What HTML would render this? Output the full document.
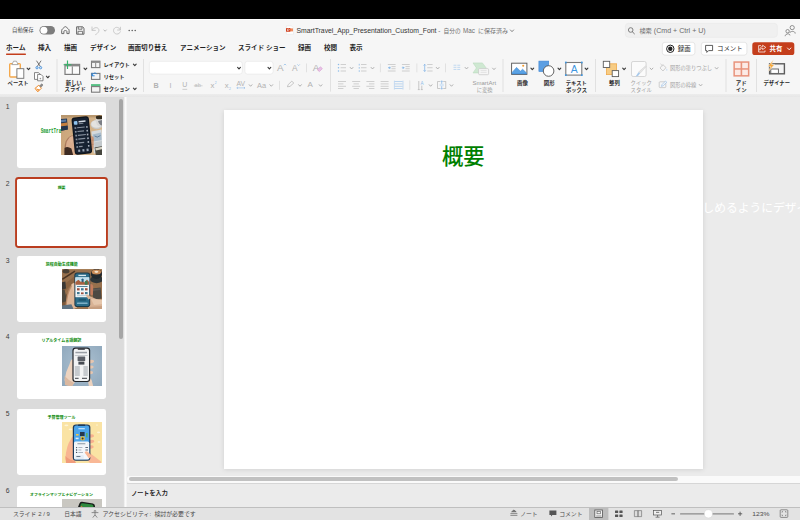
<!DOCTYPE html>
<html lang="ja"><head><meta charset="utf-8"><title>SmartTravel_App_Presentation_Custom_Font</title>
<style>
html,body{margin:0;padding:0;}
body{width:800px;height:520px;overflow:hidden;position:relative;background:#ebebeb;font-family:"Liberation Sans",sans-serif;}
.abs{position:absolute;}
#menubar{left:0;top:0;width:800px;height:19.4px;background:#000;}
#chrome{left:0;top:19.4px;width:800px;height:74.6px;background:#f6f6f6;border-top:1px solid #fdfdfd;box-sizing:border-box;}
#band{left:0;top:94px;width:800px;height:2.6px;background:linear-gradient(180deg,#ededed,#e6e6e6);}
#panel{left:0;top:96.5px;width:127.4px;height:411.6px;background:linear-gradient(90deg,#dbdbdb 0,#dbdbdb 123.4px,#fbfbfb 125.1px,#fbfbfb 125.7px,#ebebeb 127.4px);overflow:hidden;}
#pscroll{left:118.8px;top:99.2px;width:4px;height:239.6px;border-radius:2px;background:#a6a6a6;}
#work{left:126.4px;top:96.5px;width:673.6px;height:379.3px;background:#ebebeb;}
#slide{left:224.2px;top:110.2px;width:479px;height:359.2px;background:#fff;box-shadow:0 0.6px 5px rgba(0,0,0,0.12);}
#hscroll{left:127px;top:475.6px;width:673px;height:7.4px;background:#fafafa;border-radius:3px 0 0 3px;}
#hthumb{left:128.9px;top:477.1px;width:549.3px;height:4.3px;border-radius:2.2px;background:#c1c1c1;}
#notes{left:126.4px;top:483.2px;width:673.6px;height:24px;background:#ebebeb;border-top:0.8px solid #d6d6d6;}
#status{left:0;top:506.8px;width:800px;height:13.2px;background:#e3e3e3;border-top:0.8px solid #bfbfbf;}
.th{position:absolute;left:17.1px;width:88.6px;height:66.1px;background:#fff;border-radius:2.4px;}
.th.sel{left:17px;top:178.85px !important;width:89.1px;height:66.7px;box-shadow:0 0 0 1.9px #ba3d1f;border-radius:1.6px;}
.ov{position:absolute;left:0;top:0;}
.ov text{font-family:"Liberation Sans","Noto Sans CJK JP",sans-serif;}
.tx{position:absolute;white-space:nowrap;line-height:1.2;color:transparent;pointer-events:none;}
.st{position:absolute;left:40.7px;top:126.2px;width:33.4px;height:8px;overflow:hidden;white-space:nowrap;font-family:"Liberation Mono",monospace;font-weight:bold;font-size:6.9px;line-height:8px;color:#129a2c;transform:scaleX(0.62);transform-origin:0 0;}
.im{position:absolute;overflow:hidden;}
#app{position:relative;width:800px;height:520px;overflow:hidden;}
</style></head><body><div id="app">
<div id="work" class="abs"></div>
<div id="slide" class="abs"></div>
<div id="hscroll" class="abs"></div><div id="hthumb" class="abs"></div>
<div id="notes" class="abs"></div>
<div id="panel" class="abs"></div>
<div class="th" style="top:102.4px"></div><div class="th sel" style="top:179.15px"></div><div class="th" style="top:255.9px"></div><div class="th" style="top:332.65px"></div><div class="th" style="top:409.4px"></div><div class="th" style="top:486.15px"></div><svg class="im" style="left:61.4px;top:115.35px" width="40.4" height="40.1" viewBox="0 0 40.4 40.1"><defs><filter id="b0" x="-10%" y="-10%" width="120%" height="120%"><feGaussianBlur stdDeviation="0.45"/></filter></defs><g filter="url(#b0)">
<defs><linearGradient id="d1" x1="0" y1="0" x2="1" y2="0.3"><stop offset="0" stop-color="#c9a277"/><stop offset="1" stop-color="#d7b88f"/></linearGradient></defs>
<rect x="-2" y="-2" width="45" height="45" fill="url(#d1)"/>
<rect x="-2" y="-2" width="45" height="4.4" fill="#b8976e"/>
<path d="M-1 4L6 3.4L6.8 14.6L-1 16Z" fill="#2b3d57"/><path d="M-1 8.6L6.4 7.6L6.6 10.4L-1 11.6Z" fill="#c47f3c"/><path d="M-1 12L6.6 10.8L6.8 14.6L-1 16Z" fill="#22344c"/><path d="M0 5L5 4.6L5.2 6.6L0 7.2Z" fill="#5b7ea6"/>
<ellipse cx="35.8" cy="9.6" rx="6.2" ry="4.6" fill="#c9c8c5"/><ellipse cx="35.6" cy="9" rx="5.4" ry="3.8" fill="#e4e3e0"/>
<path d="M34.6 2Q34.4 10.6 38.4 11.4Q41.4 11.4 42 2Z" fill="#d9d8d6"/><ellipse cx="38.4" cy="2.4" rx="3.6" ry="1.9" fill="#33291f"/><path d="M37 6Q38.6 10.4 41 10.6V5Z" fill="#7b7f86"/>
<path d="M30.4 16.4L40.6 14.4L42 37L33 38.4Z" fill="#d4d9dc"/><path d="M31.6 19.6L40 17.6L40.6 25L32.6 26.6Z" fill="#a9bccb"/><path d="M33 27.6L41 26L41.4 32L34 33.4Z" fill="#c3c9cc"/><path d="M33.6 21Q36 23.4 39.4 20.6" stroke="#4d6f8e" stroke-width="0.8" fill="none"/>
<path d="M33.6 32.6L42 31V41H35Z" fill="#45453e"/><path d="M34.2 33.2L42 31.6V34L34.8 35.6Z" fill="#d8d4c6"/>
<path d="M4.6 26.4Q7.4 21 11.4 20.2L14.6 23L16 41H3.6Q2.8 32 4.6 26.4Z" fill="#a9795c"/><path d="M5.8 26.6Q8.2 21.8 11.4 21L14.6 23L16 41H5Q4.2 32 5.8 26.6Z" fill="#d9ad8e"/>
<path d="M8.6 22.4Q11.4 20.4 12.6 22.8Q12.8 26.4 10.6 28.4Q8.4 27 8.6 22.4Z" fill="#deb394"/>
<path d="M3.6 33Q6.4 30.6 10.4 33.6L12.4 41H3.4Z" fill="#3c2b23"/>
<path d="M29.4 21.2Q32.8 20.4 32.8 23.6L32.6 33Q31.6 36.4 29.4 35Z" fill="#c99474"/><path d="M29.6 25.2H32.6M29.6 29.4H32.6" stroke="#a87658" stroke-width="0.5"/>
<g transform="translate(0.9 0.2) rotate(-5.7 20 20)">
<rect x="11.2" y="1.6" width="17.4" height="37.4" rx="3" fill="#0f141b"/>
<rect x="12.2" y="2.8" width="15.4" height="35" rx="2.2" fill="#192230"/>
<rect x="13.2" y="5.4" width="3.6" height="3.6" rx="0.9" fill="#8fc4ee"/><rect x="18" y="5.6" width="7" height="1.5" fill="#d5dde6"/><rect x="18" y="7.8" width="4.6" height="0.9" fill="#7d8896"/>
<g fill="#8792a0"><rect x="13.4" y="11.4" width="1.7" height="1.7"/><rect x="16" y="11.5" width="7.6" height="1.2"/><rect x="13.4" y="15.2" width="1.7" height="1.7"/><rect x="16" y="15.3" width="6.6" height="1.2"/><rect x="13.4" y="19" width="1.7" height="1.7"/><rect x="16" y="19.1" width="8" height="1.2"/><rect x="13.4" y="22.8" width="1.7" height="1.7"/><rect x="16" y="22.9" width="7" height="1.2"/><rect x="13.4" y="26.6" width="1.7" height="1.7"/><rect x="16" y="26.7" width="5.6" height="1.2"/><rect x="13.4" y="30.4" width="1.7" height="1.7"/><rect x="16" y="30.5" width="3.6" height="1.2"/>
<rect x="25" y="11.4" width="1.5" height="1.7" fill="#aab4c0"/><rect x="25" y="15.2" width="1.5" height="1.7" fill="#aab4c0"/><rect x="25" y="19" width="1.5" height="1.7" fill="#aab4c0"/><rect x="25" y="22.8" width="1.5" height="1.7" fill="#aab4c0"/><rect x="25" y="26.6" width="1.5" height="1.7" fill="#aab4c0"/><rect x="25" y="30.4" width="1.5" height="1.7" fill="#aab4c0"/>
<rect x="14.8" y="34" width="2" height="2.4" fill="#9aa6b6"/><rect x="19" y="34" width="2" height="2.4" fill="#9aa6b6"/><rect x="23.2" y="34" width="2" height="2.4" fill="#9aa6b6"/></g>
</g>
</g></svg><svg class="im" style="left:61.5px;top:268.85px" width="40.3" height="40.05" viewBox="0 0 40.3 40.05"><defs><filter id="b1" x="-10%" y="-10%" width="120%" height="120%"><feGaussianBlur stdDeviation="0.45"/></filter></defs><g filter="url(#b1)">
<rect x="-2" y="-2" width="45" height="45" fill="#97704d"/>
<path d="M-1 18L14 6L16 9L-1 26Z" fill="#8a6342"/><path d="M-1 30L10 20L12 41H-1Z" fill="#7b583b"/>
<rect x="-2" y="-2" width="45" height="2.6" fill="#b08a62"/>
<ellipse cx="4" cy="2.2" rx="3.4" ry="2.2" fill="#4a4036"/>
<path d="M0 9.4L12.6 1.6L13.4 2.8L0.6 11Z" fill="#4a3424"/>
<path d="M-1 13.4L3.4 12.6L4 19.6L-1 21Z" fill="#3a3835"/><path d="M-1 21L2.6 20.4L5 32L-1 34Z" fill="#4e463d"/>
<ellipse cx="34.6" cy="10.4" rx="6.4" ry="3.8" fill="#2f3539"/>
<ellipse cx="34.4" cy="5" rx="5.6" ry="5" fill="#23292e"/><ellipse cx="34.4" cy="3" rx="4.7" ry="2.5" fill="#c88a56"/><ellipse cx="34.4" cy="2.8" rx="2" ry="1.1" fill="#f3e2cb"/>
<path d="M30.2 19.4L38.6 18.6L39.6 29.6L31.4 31Z" fill="#4d4843"/><path d="M30.6 20L38.2 19.2L38.4 21L30.8 22Z" fill="#5e5953"/>
<path d="M28 15.2Q31.2 14.6 31.2 17.6L31 25.4Q29.6 26.6 28 25.6Z" fill="#c47c5c"/>
<path d="M3.6 36Q4.2 24 8.4 17.4Q11 13 13.2 14.4L14 24L15 38.4L9 41H3Z" fill="#b98a68"/>
<path d="M4.8 36Q5.4 25 9.2 18.4Q11.4 14.4 13.2 15.4L14 24L15 38.4L9 41H4.4Z" fill="#dcb597"/>
<path d="M9.4 15.6Q11.6 13.2 13.4 14.6Q14 20 13.4 25.6Q10.6 23 9.4 15.6Z" fill="#e6c4a8"/>
<path d="M0 36.4L9.4 35.2L12 41H0Z" fill="#5f7282"/>
<path d="M24 25.4Q26.4 24.4 28.6 27.4L41 33V41H26.6Q23.8 33 24 25.4Z" fill="#d8b294"/><path d="M29 30L41 30.6V35L32 36Z" fill="#e5c6ab"/><path d="M26 38L41 37V41H27Z" fill="#c79f80"/>
<rect x="12.4" y="3.4" width="15.8" height="34.6" rx="2.8" fill="#1f3a48"/>
<rect x="13.4" y="4.4" width="13.8" height="32.6" rx="1.8" fill="#2c6c88"/>
<rect x="13.4" y="8.4" width="13.8" height="19.8" fill="#f3f5f6"/>
<rect x="13.4" y="8.4" width="13.8" height="7.4" fill="#bfe0ee"/><path d="M13.4 15.8V13L16.4 10.8L19 13L20.4 11.6L22.6 13.4L25 10.6L27.2 13V15.8Z" fill="#a9603f"/><path d="M19.4 10.4Q20.6 8.6 21.8 10.4Q21.8 12.6 20.6 13.6Q19.4 12.6 19.4 10.4Z" fill="#2c5f80"/><path d="M22.8 15.8V12.6L24.2 11.4L25.6 12.6V15.8Z" fill="#3f7a52"/>
<rect x="16.4" y="5.8" width="7.6" height="1.3" fill="#dbe8ee"/>
<g fill="#3f7891"><rect x="15" y="17" width="10.6" height="0.9"/><rect x="15" y="19.2" width="2.6" height="2.2" fill="#9c4e3c"/><rect x="19" y="19.2" width="2.6" height="2.2"/><rect x="23" y="19.2" width="2.6" height="2.2" fill="#9c4e3c"/><rect x="15" y="23" width="2.6" height="2.2"/><rect x="19" y="23.4" width="2.6" height="1.8" fill="#9c4e3c"/><rect x="23" y="23" width="2.6" height="2.2"/><rect x="15" y="26.4" width="10.6" height="0.7" fill="#9dbccb"/></g>
<rect x="16.6" y="29.8" width="7.4" height="2" rx="0.6" fill="#1f5670"/><rect x="15" y="33.4" width="10.6" height="1.5" rx="0.5" fill="#7eb0c6"/>
<path d="M23.8 26.2Q25.4 24.8 27 26.2L29.4 29L26.4 30.6Z" fill="#dcb597"/>
</g></svg><svg class="im" style="left:61.6px;top:345.65px" width="40.1" height="40.05" viewBox="0 0 40.1 40.05"><defs><filter id="b2" x="-10%" y="-10%" width="120%" height="120%"><feGaussianBlur stdDeviation="0.45"/></filter></defs><g filter="url(#b2)">
<defs><radialGradient id="rg4" cx="50%" cy="45%" r="70%"><stop offset="0" stop-color="#adc2d2"/><stop offset="1" stop-color="#8ca5ba"/></radialGradient></defs>
<rect x="-2" y="-2" width="45" height="45" fill="url(#rg4)"/>
<path d="M2.6 34Q3.4 26 7.6 18Q9 12.6 11 13.4L11.6 22L13 36L10 40L4 39Z" fill="#ecd3bf"/>
<path d="M2.6 30Q6 34 12 37L10 40.5L3 39Z" fill="#dab8a0"/>
<path d="M27.6 14Q32.4 13 32 16Q30 17.6 27.6 17.4ZM27.6 19.6Q32 18.8 31.6 21.6Q30 23 27.6 22.8ZM27.6 25Q31.4 24.4 31 27.2Q29.6 28.4 27.6 28.2Z" fill="#e6c6b0"/>
<path d="M25.6 32.6Q28.4 31 29.6 34L31.4 41H27Z" fill="#ecd2be"/>
<rect x="10.4" y="1.5" width="17.8" height="34.6" rx="3" fill="#23272c"/>
<rect x="11.6" y="2.7" width="15.4" height="32.2" rx="2" fill="#f2f3f4"/>
<rect x="15.6" y="2.4" width="7.4" height="1.3" rx="0.6" fill="#23272c"/>
<rect x="13.4" y="5.8" width="11.6" height="1.5" fill="#9a9fa6"/>
<rect x="15.6" y="10.6" width="7.6" height="4.4" rx="0.5" fill="#5c6168"/><rect x="16.4" y="15.6" width="6" height="3" fill="#474c53"/>
<g fill="#b4b8be"><rect x="12.8" y="9" width="12.8" height="0.7"/><rect x="12.8" y="20" width="5" height="10" opacity="0.7"/><rect x="19.4" y="20" width="2" height="10" fill="#f2f3f4"/><rect x="21.4" y="20" width="4.4" height="10" opacity="0.7"/><rect x="13" y="31.8" width="3.6" height="1" fill="#3c4046"/><rect x="20" y="31.8" width="5" height="1" fill="#3c4046"/></g>
</g></svg><svg class="im" style="left:61.6px;top:422.35px" width="40.0" height="40.2" viewBox="0 0 40.0 40.2"><defs><filter id="b3" x="-10%" y="-10%" width="120%" height="120%"><feGaussianBlur stdDeviation="0.45"/></filter></defs><g filter="url(#b3)">
<rect x="-2" y="-2" width="45" height="45" fill="#fae3a4"/>
<g fill="#fdf3d6"><ellipse cx="4.4" cy="3.4" rx="2" ry="0.8"/><ellipse cx="8.6" cy="7.4" rx="2" ry="0.8"/><ellipse cx="36.6" cy="10.4" rx="1.6" ry="0.8"/><ellipse cx="37" cy="20" rx="1.4" ry="0.7"/><ellipse cx="35" cy="3" rx="1.2" ry="0.6"/></g>
<path d="M3.4 37Q4 24 9 17Q10.6 13.6 11.6 15L12 26L13 38L10 41L4.4 40Z" fill="#f8b592"/>
<path d="M3.4 34Q7 38 13 39L14 41H4Z" fill="#f09c7c"/>
<path d="M27.6 12.6Q32.4 11.4 32 14.4Q30 16 27.6 15.8ZM27.6 18Q32.6 17 32.2 20Q30 21.6 27.6 21.4ZM27.6 23.4Q32 22.6 31.6 25.6Q30 27 27.6 26.8Z" fill="#f7b08e"/>
<path d="M22 30Q23.6 27.6 26 29.6L39 39.6V41H28Q23 36 22 30Z" fill="#f9b896"/>
<rect x="10.8" y="2.4" width="17.6" height="36.4" rx="3.2" fill="#1e3a5c"/>
<rect x="12" y="3.6" width="15.2" height="34" rx="2.2" fill="#4ba4ea"/>
<rect x="12" y="19.6" width="15.2" height="18" rx="1.6" fill="#f3f7fb"/>
<rect x="16" y="2.6" width="7.2" height="1.5" rx="0.7" fill="#1e3a5c"/>
<rect x="16.4" y="6" width="6.4" height="1.3" fill="#bfe0fa"/>
<rect x="18" y="10" width="4.6" height="4" fill="#27384e"/><rect x="18.6" y="14.6" width="4" height="3.6" rx="0.6" fill="#f1b92e"/><circle cx="20.6" cy="16.4" r="1" fill="#27384e"/>
<rect x="24" y="11" width="1.6" height="4.4" fill="#58b06a"/><rect x="14" y="12" width="2.6" height="1.6" fill="#f1c84a"/><rect x="13.6" y="15.6" width="3" height="1.6" fill="#dceefb"/>
<rect x="13.4" y="20.8" width="12.4" height="2" rx="1" fill="#fff" stroke="#c9d6e2" stroke-width="0.3"/><rect x="15.4" y="21.4" width="8" height="0.8" fill="#6c7a8a"/>
<g fill="#3c4a5c"><circle cx="14.6" cy="25.6" r="0.7"/><rect x="16.4" y="25.2" width="4" height="0.8" fill="#9aa6b4"/><rect x="23.4" y="25.2" width="2.6" height="0.8"/><circle cx="14.6" cy="28" r="0.7"/><rect x="16.4" y="27.6" width="3" height="0.8" fill="#9aa6b4"/><rect x="23.4" y="27.6" width="2.6" height="0.8"/><circle cx="14.6" cy="30.4" r="0.7"/><rect x="16.4" y="30" width="4.6" height="0.8" fill="#9aa6b4"/></g>
<rect x="13.4" y="33" width="8.4" height="4" rx="0.8" fill="#e4edf6"/><rect x="14.4" y="34" width="4" height="0.8" fill="#4a5a6c"/>
<path d="M22.6 30.6Q23.8 28.4 26 30L30 34L27 36.4Z" fill="#f9b896"/>
</g></svg><svg class="im" style="left:61.6px;top:499.2px" width="40.3" height="8.4" viewBox="0 0 40.3 8.4"><defs><filter id="b4" x="-10%" y="-10%" width="120%" height="120%"><feGaussianBlur stdDeviation="0.45"/></filter></defs><g filter="url(#b4)">
<rect x="-2" y="-2" width="45" height="14" fill="#c9c7c1"/>
<path d="M15.6 9L17.4 4.4Q18 2.6 20 2.8L31 4.4Q33 5 33 7V9Z" fill="#1a1f1c"/>
<path d="M17.6 9L18.8 5.2Q19.2 4 20.6 4.2L30 5.6Q31.4 6 31.4 7.4V9Z" fill="#2e8a3c"/>
<circle cx="19.6" cy="7.4" r="0.7" fill="#c8743a"/>
</g></svg>
<div id="pscroll" class="abs"></div>
<div id="band" class="abs"></div>
<div id="chrome" class="abs"></div>
<div id="menubar" class="abs"></div>
<div id="status" class="abs"></div>
<div id="labels"><span class="tx" style="left:12.0px;top:27.1px;font-size:5.40px">自動保存</span><span class="tx" style="left:296.4px;top:26.2px;font-size:6.80px">SmartTravel_App_Presentation_Custom_Font</span><span class="tx" style="left:438.2px;top:26.6px;font-size:6.40px">-</span><span class="tx" style="left:443.6px;top:27.0px;font-size:5.70px">自分の</span><span class="tx" style="left:463.0px;top:26.6px;font-size:6.30px">Mac</span><span class="tx" style="left:478.0px;top:26.8px;font-size:6.00px">に保存済み</span><span class="tx" style="left:639.4px;top:26.8px;font-size:6.20px">検索</span><span class="tx" style="left:653.8px;top:26.5px;font-size:6.50px">(Cmd + Ctrl + U)</span><span class="tx" style="left:6.0px;top:43.6px;font-size:6.55px">ホーム</span><span class="tx" style="left:38.0px;top:43.6px;font-size:6.55px">挿入</span><span class="tx" style="left:64.0px;top:43.6px;font-size:6.55px">描画</span><span class="tx" style="left:90.0px;top:43.6px;font-size:6.55px">デザイン</span><span class="tx" style="left:128.0px;top:43.6px;font-size:6.55px">画面切り替え</span><span class="tx" style="left:180.0px;top:43.6px;font-size:6.55px">アニメーション</span><span class="tx" style="left:238.0px;top:43.6px;font-size:6.55px">スライド ショー</span><span class="tx" style="left:298.0px;top:43.6px;font-size:6.55px">録画</span><span class="tx" style="left:324.0px;top:43.6px;font-size:6.55px">校閲</span><span class="tx" style="left:349.5px;top:43.6px;font-size:6.55px">表示</span><span class="tx" style="left:677.8px;top:44.9px;font-size:6.40px">録画</span><span class="tx" style="left:717.0px;top:44.9px;font-size:6.40px">コメント</span><span class="tx" style="left:769.6px;top:44.9px;font-size:6.40px">共有</span><span class="tx" style="left:7.6px;top:80.1px;font-size:5.30px">ペースト</span><span class="tx" style="left:65.8px;top:79.7px;font-size:5.30px">新しい</span><span class="tx" style="left:64.6px;top:86.1px;font-size:5.30px">スライド</span><span class="tx" style="left:103.4px;top:61.6px;font-size:5.30px">レイアウト</span><span class="tx" style="left:103.4px;top:73.5px;font-size:5.30px">リセット</span><span class="tx" style="left:103.4px;top:85.6px;font-size:5.30px">セクション</span><span class="tx" style="left:277.0px;top:61.2px;font-size:9.90px">A</span><span class="tx" style="left:292.0px;top:62.7px;font-size:8.30px">A</span><span class="tx" style="left:312.8px;top:61.2px;font-size:9.90px">A</span><span class="tx" style="left:153.6px;top:80.6px;font-size:7.20px">B</span><span class="tx" style="left:169.4px;top:80.6px;font-size:7.20px">I</span><span class="tx" style="left:182.2px;top:80.5px;font-size:7.00px">U</span><span class="tx" style="left:194.6px;top:81.9px;font-size:5.60px">ab</span><span class="tx" style="left:210.6px;top:80.7px;font-size:7.80px">x</span><span class="tx" style="left:214.8px;top:80.4px;font-size:3.40px">2</span><span class="tx" style="left:224.8px;top:80.7px;font-size:7.80px">x</span><span class="tx" style="left:229.0px;top:86.4px;font-size:3.40px">2</span><span class="tx" style="left:236.4px;top:79.4px;font-size:6.80px">AV</span><span class="tx" style="left:257.0px;top:80.6px;font-size:7.40px">Aa</span><span class="tx" style="left:307.6px;top:79.1px;font-size:8.00px">A</span><span class="tx" style="left:472.6px;top:79.9px;font-size:5.60px">SmartArt</span><span class="tx" style="left:476.7px;top:86.6px;font-size:5.30px">に変換</span><span class="tx" style="left:420.4px;top:80.0px;font-size:4.60px">A</span><span class="tx" style="left:517.0px;top:80.0px;font-size:5.40px">画像</span><span class="tx" style="left:543.8px;top:80.0px;font-size:5.40px">図形</span><span class="tx" style="left:570.6px;top:62.5px;font-size:10.40px">A</span><span class="tx" style="left:565.8px;top:80.1px;font-size:5.30px">テキスト</span><span class="tx" style="left:566.0px;top:86.3px;font-size:5.30px">ボックス</span><span class="tx" style="left:609.0px;top:80.0px;font-size:5.40px">整列</span><span class="tx" style="left:630.6px;top:80.1px;font-size:5.30px">クイック</span><span class="tx" style="left:630.6px;top:86.6px;font-size:5.30px">スタイル</span><span class="tx" style="left:670.0px;top:64.9px;font-size:5.25px">図形の塗りつぶし</span><span class="tx" style="left:670.0px;top:81.8px;font-size:5.25px">図形の枠線</span><span class="tx" style="left:735.8px;top:80.0px;font-size:5.40px">アド</span><span class="tx" style="left:735.8px;top:86.5px;font-size:5.40px">イン</span><span class="tx" style="left:763.5px;top:80.0px;font-size:5.30px">デザイナー</span><span class="tx" style="left:5.7px;top:102.4px;font-size:6.80px">1</span><span class="tx" style="left:5.7px;top:179.2px;font-size:6.80px">2</span><span class="tx" style="left:5.7px;top:255.9px;font-size:6.80px">3</span><span class="tx" style="left:5.7px;top:332.7px;font-size:6.80px">4</span><span class="tx" style="left:5.7px;top:409.4px;font-size:6.80px">5</span><span class="tx" style="left:5.7px;top:486.2px;font-size:6.80px">6</span><span class="tx" style="left:40.7px;top:125.9px;font-size:6.90px">SmartTravel</span><span class="tx" style="left:57.7px;top:184.9px;font-size:3.90px">概要</span><span class="tx" style="left:45.8px;top:261.6px;font-size:4.00px">旅程自動生成機能</span><span class="tx" style="left:41.4px;top:338.4px;font-size:4.00px">リアルタイム言語翻訳</span><span class="tx" style="left:47.4px;top:415.1px;font-size:4.00px">予算管理ツール</span><span class="tx" style="left:30.0px;top:491.9px;font-size:3.95px">オフラインマップとナビゲーション</span><span class="tx" style="left:441.9px;top:143.1px;font-size:21.30px">概要</span><span class="tx" style="left:702.4px;top:200.1px;font-size:11.75px">しめるようにデザイ</span><span class="tx" style="left:131.2px;top:488.7px;font-size:6.10px">ノートを入力</span><span class="tx" style="left:13.0px;top:510.5px;font-size:5.80px">スライド</span><span class="tx" style="left:38.2px;top:510.4px;font-size:6.00px">2 / 9</span><span class="tx" style="left:64.2px;top:510.5px;font-size:5.80px">日本語</span><span class="tx" style="left:102.4px;top:510.4px;font-size:5.98px">アクセシビリティ:</span><span class="tx" style="left:154.4px;top:510.4px;font-size:5.92px">検討が必要です</span><span class="tx" style="left:520.2px;top:510.5px;font-size:5.80px">ノート</span><span class="tx" style="left:559.2px;top:510.5px;font-size:5.85px">コメント</span><span class="tx" style="left:752.2px;top:510.4px;font-size:6.00px">123%</span></div>
<svg class="ov" width="800" height="520" viewBox="0 0 800 520"><text x="12" y="32.35" font-size="5.4" fill="#4a4a4a">自動保存</text><rect x="39.5" y="26" width="15.5" height="8.6" rx="4.3" fill="#7d7d7d"/><circle cx="43.9" cy="30.3" r="3.5" fill="#fff"/><path d="M61.7 30.4Q61.7 29.6 62.4 29L64.6 27Q65.4 26.3 66.2 27L68.4 29Q69.1 29.6 69.1 30.4V33.6H66.9V31.4Q66.9 30.6 65.4 30.6Q63.9 30.6 63.9 31.4V33.6H61.7Z" fill="none" stroke="#696969" stroke-width="1" stroke-linejoin="round"/><path d="M76.6 26.8H82.6L84 28.2V34.2H76.6Z" fill="none" stroke="#696969" stroke-width="1" stroke-linejoin="round"/><path d="M78.3 26.9V29.2H82V26.9M78 34.1V31.3H82.6V34.1" fill="none" stroke="#696969" stroke-width="0.9"/><path d="M92 27V30.4H95.4M92.2 30.2C93.4 27.6 96.6 26.8 98.3 28.6C99.8 30.4 98.6 33 95.6 34.6" fill="none" stroke="#c4c4c4" stroke-width="0.9" stroke-linecap="round"/><path d="M103.90 29.95L105.10 31.25L106.30 29.95" fill="none" stroke="#a8a8a8" stroke-width="0.8" stroke-linecap="round" stroke-linejoin="round"/><path d="M120.4 27.2V30H117.6M120.3 29.8C119.2 27 115.6 26.4 114 28.8C112.8 31 114 33.6 116.6 34C118.4 34.2 119.8 33.2 120.4 31.8" fill="none" stroke="#c4c4c4" stroke-width="0.9" stroke-linecap="round"/><circle cx="129.2" cy="30.6" r="0.75" fill="#555"/><circle cx="132.2" cy="30.6" r="0.75" fill="#555"/><circle cx="135.2" cy="30.6" r="0.75" fill="#555"/><path d="M286.4 25.9H291.4L293.5 28V34.2H286.4Z" fill="#fff" stroke="#dedede" stroke-width="0.4"/><rect x="289.6" y="28.4" width="3.4" height="3" fill="#f08a5c"/><rect x="286" y="28" width="4.3" height="3.8" rx="0.5" fill="#d0401f"/><path d="M287.5 31V28.9H288.6Q289.3 29 289.3 29.6Q289.3 30.2 288.6 30.3H287.5" fill="none" stroke="#fff" stroke-width="0.5"/><text x="296.4" y="32.88" font-size="6.8" fill="#333" textLength="140" lengthAdjust="spacingAndGlyphs">SmartTravel_App_Presentation_Custom_Font</text><text x="438.2" y="32.83" font-size="6.4" fill="#707070">-</text><text x="443.6" y="32.57" font-size="5.7" fill="#707070">自分の</text><text x="463" y="32.79" font-size="6.3" fill="#707070">Mac</text><text x="478" y="32.68" font-size="6" fill="#707070">に保存済み</text><path d="M510.40 29.95L512.00 31.65L513.60 29.95" fill="none" stroke="#666" stroke-width="0.8" stroke-linecap="round" stroke-linejoin="round"/><rect x="625.3" y="23.3" width="152" height="14" rx="3.2" fill="#f0f0f0" stroke="#e7e7e7" stroke-width="0.6"/><circle cx="630.7" cy="30" r="2.3" fill="none" stroke="#666" stroke-width="0.8"/><path d="M632.4 31.8L634.4 33.8" stroke="#666" stroke-width="0.9" stroke-linecap="round"/><text x="639.4" y="32.86" font-size="6.2" fill="#6b6b6b">検索</text><text x="653.8" y="32.87" font-size="6.5" fill="#6b6b6b" textLength="51.9" lengthAdjust="spacingAndGlyphs">(Cmd + Ctrl + U)</text><circle cx="792.2" cy="27.6" r="2.1" fill="none" stroke="#777" stroke-width="0.8"/><circle cx="787.6" cy="31.2" r="1.7" fill="none" stroke="#777" stroke-width="0.8"/><path d="M785.2 36.2C785.2 33.2 790 33.2 790 35.4M789.6 33C790 31 795.4 30.6 795.2 33.6" fill="none" stroke="#777" stroke-width="0.8"/><text x="6" y="49.99" font-size="6.55" font-weight="bold" fill="#1f1f1f">ホーム</text><text x="38" y="49.99" font-size="6.55" font-weight="bold" fill="#1f1f1f">挿入</text><text x="64" y="49.99" font-size="6.55" font-weight="bold" fill="#1f1f1f">描画</text><text x="90" y="49.99" font-size="6.55" font-weight="bold" fill="#1f1f1f">デザイン</text><text x="128" y="49.99" font-size="6.55" font-weight="bold" fill="#1f1f1f">画面切り替え</text><text x="180" y="49.99" font-size="6.55" font-weight="bold" fill="#1f1f1f">アニメーション</text><text x="238" y="49.99" font-size="6.55" font-weight="bold" fill="#1f1f1f">スライド ショー</text><text x="298" y="49.99" font-size="6.55" font-weight="bold" fill="#1f1f1f">録画</text><text x="324" y="49.99" font-size="6.55" font-weight="bold" fill="#1f1f1f">校閲</text><text x="349.5" y="49.99" font-size="6.55" font-weight="bold" fill="#1f1f1f">表示</text><rect x="6" y="53.6" width="20" height="1.3" rx="0.6" fill="#c43e1c"/><rect x="662.3" y="42.3" width="32.6" height="12.8" rx="2.6" fill="#fff" stroke="#d6d6d6" stroke-width="0.6"/><circle cx="670.3" cy="48.8" r="3.7" fill="none" stroke="#222" stroke-width="1"/><circle cx="670.3" cy="48.8" r="2.2" fill="#222"/><text x="677.8" y="51.13" font-size="6.4" fill="#1f1f1f">録画</text><rect x="701.3" y="42.3" width="45.6" height="12.8" rx="2.6" fill="#fff" stroke="#d6d6d6" stroke-width="0.6"/><path d="M705.6 45.4H712.6V50.6H708.6L706.8 52.4V50.6H705.6Z" fill="none" stroke="#333" stroke-width="0.8" stroke-linejoin="round"/><text x="717" y="51.13" font-size="6.4" fill="#1f1f1f">コメント</text><rect x="752.3" y="42.3" width="42" height="12.8" rx="2.6" fill="#c43e1c"/><path d="M761 45.6H758.6V52H765V50.4M762.6 45.2L765.8 47.4L762.6 49.6V48.2C761 48.2 760.2 49 759.8 50.2C759.8 47.8 761 46.6 762.6 46.6Z" fill="none" stroke="#fff" stroke-width="0.7" stroke-linejoin="round"/><text x="769.6" y="51.13" font-size="6.4" font-weight="bold" fill="#fff">共有</text><path d="M787.50 48.00L789.20 49.80L790.90 48.00" fill="none" stroke="#fff" stroke-width="0.9" stroke-linecap="round" stroke-linejoin="round"/><rect x="9.7" y="63.6" width="10.6" height="13.4" rx="1" fill="#fff" stroke="#f4a84c" stroke-width="1.4"/><path d="M11.8 64.6L13.6 61.2H16.4L18.2 64.6Z" fill="#fff" stroke="#8c8c8c" stroke-width="0.7" stroke-linejoin="round"/><rect x="16.9" y="68.7" width="6.9" height="9.6" fill="#fff" stroke="#6f6f6f" stroke-width="0.9"/><path d="M27.10 68.12L28.50 69.68L29.90 68.12" fill="none" stroke="#3a3a3a" stroke-width="1.1" stroke-linecap="round" stroke-linejoin="round"/><text x="7.6" y="85.26" font-size="5.3" font-weight="bold" fill="#2a2a2a">ペースト</text><path d="M36.7 61L40.3 66.4M40.9 61L37.3 66.4" stroke="#5c5c5c" stroke-width="0.85" stroke-linecap="round"/><circle cx="37" cy="67.7" r="1.15" fill="#d5e6f7" stroke="#3c8ad9" stroke-width="0.8"/><circle cx="40.6" cy="67.7" r="1.15" fill="#d5e6f7" stroke="#3c8ad9" stroke-width="0.8"/><path d="M34.5 72.6H38.4L40 74.2V79.4H34.5Z" fill="#fff" stroke="#686868" stroke-width="0.8" stroke-linejoin="round"/><path d="M37.6 74.4H41L43 76.4V80.8H37.6Z" fill="#fff" stroke="#686868" stroke-width="0.8" stroke-linejoin="round"/><path d="M39.6 78.6H41.2M40.4 77.8V79.4" stroke="#686868" stroke-width="0.5"/><path d="M46.40 76.22L47.80 77.78L49.20 76.22" fill="none" stroke="#3a3a3a" stroke-width="1.1" stroke-linecap="round" stroke-linejoin="round"/><path d="M35 88.4L38.8 85.2L41.4 88.2L37.8 91.8Z" fill="#fff" stroke="#f08a28" stroke-width="1"/><path d="M36.4 88.6L38.2 90.6L39.4 89.4" fill="#f08a28" stroke="#f08a28" stroke-width="0.8"/><path d="M39.6 85.8L41.8 83.8L43 85L41 87.2Z" fill="#8a8a8a" stroke="#6f6f6f" stroke-width="0.5"/><rect x="56.6" y="59" width="0.8" height="33" fill="#dcdcdc"/><rect x="65" y="64.4" width="14.6" height="10" fill="#fbfbfb" stroke="#7c7c7c" stroke-width="1.2"/><rect x="65" y="64.2" width="14.6" height="2.2" fill="#8a8a8a"/><path d="M72.3 66.4V74.4" stroke="#7c7c7c" stroke-width="1"/><path d="M67.5 60.6V69M63.6 64.7H71.4" stroke="#35b56a" stroke-width="1.15"/><path d="M84.00 68.12L85.40 69.68L86.80 68.12" fill="none" stroke="#3a3a3a" stroke-width="1.1" stroke-linecap="round" stroke-linejoin="round"/><text x="65.85" y="84.91" font-size="5.3" font-weight="bold" fill="#2a2a2a">新しい</text><text x="64.6" y="91.31" font-size="5.3" font-weight="bold" fill="#2a2a2a">スライド</text><rect x="91.5" y="61.2" width="8.4" height="6.4" fill="#f4f4f4" stroke="#7a7a7a" stroke-width="1.1"/><rect x="91.5" y="61" width="8.4" height="1.9" fill="#8a8a8a"/><path d="M95.7 63V67.6" stroke="#7a7a7a" stroke-width="0.9"/><text x="103.4" y="66.76" font-size="5.3" font-weight="bold" fill="#2a2a2a">レイアウト</text><path d="M133.40 64.12L134.80 65.68L136.20 64.12" fill="none" stroke="#3a3a3a" stroke-width="1.1" stroke-linecap="round" stroke-linejoin="round"/><rect x="91.5" y="73.4" width="8.4" height="6" fill="#f4f4f4" stroke="#7a7a7a" stroke-width="1.1"/><path d="M92.2 75.8C92.4 73.2 95.4 72 96.8 74.2M92 72.8V75.8H94.6" fill="none" stroke="#2d86de" stroke-width="1"/><text x="103.4" y="78.71" font-size="5.3" font-weight="bold" fill="#2a2a2a">リセット</text><rect x="91.5" y="86.6" width="8.4" height="5.6" fill="#f4f4f4" stroke="#7a7a7a" stroke-width="1.1"/><rect x="91" y="84.1" width="9.4" height="1.9" fill="#56c084"/><text x="103.4" y="90.76" font-size="5.3" font-weight="bold" fill="#2a2a2a">セクション</text><path d="M133.40 88.12L134.80 89.68L136.20 88.12" fill="none" stroke="#3a3a3a" stroke-width="1.1" stroke-linecap="round" stroke-linejoin="round"/><rect x="143.0" y="59" width="0.8" height="33" fill="#dcdcdc"/><rect x="149.3" y="61.3" width="93" height="12.8" rx="2.6" fill="#fff" stroke="#e4e4e4" stroke-width="0.6"/><path d="M237.60 67.42L239.00 68.98L240.40 67.42" fill="none" stroke="#3a3a3a" stroke-width="1.1" stroke-linecap="round" stroke-linejoin="round"/><rect x="244.9" y="61.3" width="28.2" height="12.8" rx="2.6" fill="#fff" stroke="#e4e4e4" stroke-width="0.6"/><path d="M268.00 67.42L269.40 68.98L270.80 67.42" fill="none" stroke="#3a3a3a" stroke-width="1.1" stroke-linecap="round" stroke-linejoin="round"/><text x="277" y="70.86" font-size="9.9" fill="#b2b2b2">A</text><path d="M283.8 65.2L285 64L286.2 65.2" fill="none" stroke="#8dbbe8" stroke-width="0.7"/><text x="292" y="70.85" font-size="8.3" fill="#b2b2b2">A</text><path d="M297.4 64.4L298.6 65.6L299.8 64.4" fill="none" stroke="#8dbbe8" stroke-width="0.7"/><rect x="306.2" y="63.5" width="0.8" height="8.799999999999997" fill="#dcdcdc"/><text x="312.8" y="70.86" font-size="9.9" fill="#b2b2b2">A</text><path d="M317.4 69.8L320.4 66.8L322.4 68.6L319.4 71.6Z" fill="#e9c3e6" stroke="#d59ad2" stroke-width="0.6"/><text x="153.6" y="87.64" font-size="7.2" font-weight="bold" fill="#b2b2b2">B</text><text x="169.4" y="87.64" font-size="7.2" fill="#b2b2b2">I</text><text x="182.2" y="87.36" font-size="7" fill="#b2b2b2">U</text><rect x="182.4" y="88.9" width="4.8" height="0.6" fill="#b2b2b2"/><text x="194.6" y="87.43" font-size="5.6" fill="#bcbcbc">ab</text><rect x="193.8" y="85.6" width="8.8" height="0.55" fill="#bcbcbc"/><text x="210.6" y="88.36" font-size="7.8" fill="#b2b2b2">x</text><text x="214.8" y="83.69" font-size="3.4" fill="#8fb9e6">2</text><text x="224.8" y="88.36" font-size="7.8" fill="#b2b2b2">x</text><text x="229" y="89.69" font-size="3.4" fill="#8fb9e6">2</text><text x="236.4" y="86.08" font-size="6.8" fill="#b2b2b2">AV</text><path d="M236.8 87.9H245M237.9 87L236.8 87.9L237.9 88.8M243.9 87L245 87.9L243.9 88.8" fill="none" stroke="#8fb9e6" stroke-width="0.6"/><path d="M249.20 84.72L250.60 86.28L252.00 84.72" fill="none" stroke="#a4a4a4" stroke-width="0.85" stroke-linecap="round" stroke-linejoin="round"/><text x="257" y="87.81" font-size="7.4" fill="#b2b2b2">Aa</text><path d="M269.90 84.72L271.30 86.28L272.70 84.72" fill="none" stroke="#a4a4a4" stroke-width="0.85" stroke-linecap="round" stroke-linejoin="round"/><rect x="279.0" y="80.8" width="0.8" height="9.0" fill="#dcdcdc"/><path d="M287.4 86.8L288.2 84.6L291.8 81.2L293.8 83L290 86.4Z" fill="none" stroke="#b2b2b2" stroke-width="0.7" stroke-linejoin="round"/><path d="M298.60 84.72L300.00 86.28L301.40 84.72" fill="none" stroke="#a4a4a4" stroke-width="0.85" stroke-linecap="round" stroke-linejoin="round"/><text x="307.6" y="86.94" font-size="8" fill="#b2b2b2">A</text><path d="M319.20 84.72L320.60 86.28L322.00 84.72" fill="none" stroke="#a4a4a4" stroke-width="0.85" stroke-linecap="round" stroke-linejoin="round"/><rect x="330.2" y="59" width="0.8" height="32.599999999999994" fill="#dcdcdc"/><circle cx="338.5" cy="64.6" r="0.75" fill="#8dbbe8"/><circle cx="338.5" cy="67.8" r="0.75" fill="#8dbbe8"/><circle cx="338.5" cy="71.0" r="0.75" fill="#8dbbe8"/><rect x="340.6" y="64.22" width="5.4" height="0.75" fill="#c2c2c2"/><rect x="340.6" y="67.42" width="5.4" height="0.75" fill="#c2c2c2"/><rect x="340.6" y="70.62" width="5.4" height="0.75" fill="#c2c2c2"/><path d="M350.20 67.42L351.60 68.98L353.00 67.42" fill="none" stroke="#a4a4a4" stroke-width="0.85" stroke-linecap="round" stroke-linejoin="round"/><rect x="358.8" y="63.8" width="0.8" height="1.7" fill="#8dbbe8"/><rect x="358.8" y="67.0" width="0.8" height="1.7" fill="#8dbbe8"/><rect x="358.8" y="70.2" width="0.8" height="1.7" fill="#8dbbe8"/><rect x="361" y="64.22" width="5.5" height="0.75" fill="#c2c2c2"/><rect x="361" y="67.42" width="5.5" height="0.75" fill="#c2c2c2"/><rect x="361" y="70.62" width="5.5" height="0.75" fill="#c2c2c2"/><path d="M371.10 67.42L372.50 68.98L373.90 67.42" fill="none" stroke="#a4a4a4" stroke-width="0.85" stroke-linecap="round" stroke-linejoin="round"/><rect x="379.9" y="63.5" width="0.8" height="8.799999999999997" fill="#dcdcdc"/><rect x="387.8" y="64.12" width="7.8" height="0.75" fill="#c2c2c2"/><rect x="391.4" y="66.33" width="4.2" height="0.75" fill="#c2c2c2"/><rect x="391.4" y="68.42" width="4.2" height="0.75" fill="#c2c2c2"/><rect x="387.8" y="70.62" width="7.8" height="0.75" fill="#c2c2c2"/><path d="M390.2 66.2L388 67.7L390.2 69.2Z" fill="#8dbbe8"/><path d="M388 67.7H391" stroke="#8dbbe8" stroke-width="0.6"/><rect x="401.9" y="64.12" width="7.8" height="0.75" fill="#c2c2c2"/><rect x="405.5" y="66.33" width="4.2" height="0.75" fill="#c2c2c2"/><rect x="405.5" y="68.42" width="4.2" height="0.75" fill="#c2c2c2"/><rect x="401.9" y="70.62" width="7.8" height="0.75" fill="#c2c2c2"/><path d="M402.6 66.2L404.8 67.7L402.6 69.2Z" fill="#8dbbe8"/><path d="M401.8 67.7H404" stroke="#8dbbe8" stroke-width="0.6"/><rect x="416.5" y="63.5" width="0.8" height="8.799999999999997" fill="#dcdcdc"/><rect x="427.2" y="64.22" width="5.4" height="0.75" fill="#c2c2c2"/><rect x="427.2" y="67.42" width="5.4" height="0.75" fill="#c2c2c2"/><rect x="427.2" y="70.62" width="5.4" height="0.75" fill="#c2c2c2"/><path d="M424.7 64.4V71.4M423.6 65.5L424.7 64.3L425.8 65.5M423.6 70.3L424.7 71.5L425.8 70.3" fill="none" stroke="#7fb2e5" stroke-width="0.75"/><path d="M436.30 67.42L437.70 68.98L439.10 67.42" fill="none" stroke="#a4a4a4" stroke-width="0.85" stroke-linecap="round" stroke-linejoin="round"/><rect x="445.2" y="63.5" width="0.8" height="8.799999999999997" fill="#dcdcdc"/><rect x="453.5" y="64.75" width="2.9" height="0.9" fill="#bcd6f0"/><rect x="453.5" y="66.85" width="2.9" height="0.9" fill="#bcd6f0"/><rect x="453.5" y="68.95" width="2.9" height="0.9" fill="#bcd6f0"/><rect x="457.3" y="64.75" width="2.9" height="0.9" fill="#bcd6f0"/><rect x="457.3" y="66.85" width="2.9" height="0.9" fill="#bcd6f0"/><rect x="457.3" y="68.95" width="2.9" height="0.9" fill="#bcd6f0"/><path d="M465.10 67.42L466.50 68.98L467.90 67.42" fill="none" stroke="#a4a4a4" stroke-width="0.85" stroke-linecap="round" stroke-linejoin="round"/><path d="M473 62.9H482.4L486.2 67.9L482.4 72.9H473L476.4 67.9Z" fill="#cfe8d2" stroke="#b4d9b9" stroke-width="0.5"/><rect x="478.6" y="68.6" width="10" height="6.1" rx="1" fill="#f6f6f6" stroke="#c6c6c6" stroke-width="0.7"/><path d="M480.6 70.6H486.6M480.6 72.4H486.6" stroke="#cfcfcf" stroke-width="0.5"/><path d="M492.60 68.12L494.00 69.68L495.40 68.12" fill="none" stroke="#a4a4a4" stroke-width="0.85" stroke-linecap="round" stroke-linejoin="round"/><text x="472.58" y="85.38" font-size="5.6" fill="#9a9a9a" textLength="23.6" lengthAdjust="spacingAndGlyphs">SmartArt</text><text x="476.65" y="91.76" font-size="5.3" fill="#9a9a9a">に変換</text><rect x="338.0" y="81.25" width="8" height="0.75" fill="#c2c2c2"/><rect x="338.0" y="83.55" width="5.4" height="0.75" fill="#c2c2c2"/><rect x="338.0" y="85.85" width="8" height="0.75" fill="#c2c2c2"/><rect x="338.0" y="88.15" width="5.4" height="0.75" fill="#c2c2c2"/><rect x="352.2" y="81.25" width="8" height="0.75" fill="#c2c2c2"/><rect x="353.5" y="83.55" width="5.4" height="0.75" fill="#c2c2c2"/><rect x="352.2" y="85.85" width="8" height="0.75" fill="#c2c2c2"/><rect x="353.5" y="88.15" width="5.4" height="0.75" fill="#c2c2c2"/><rect x="366.4" y="81.25" width="8" height="0.75" fill="#c2c2c2"/><rect x="369.0" y="83.55" width="5.4" height="0.75" fill="#c2c2c2"/><rect x="366.4" y="85.85" width="8" height="0.75" fill="#c2c2c2"/><rect x="369.0" y="88.15" width="5.4" height="0.75" fill="#c2c2c2"/><rect x="380.6" y="81.25" width="8" height="0.75" fill="#c2c2c2"/><rect x="380.6" y="83.55" width="8" height="0.75" fill="#c2c2c2"/><rect x="380.6" y="85.85" width="8" height="0.75" fill="#c2c2c2"/><rect x="380.6" y="88.15" width="8" height="0.75" fill="#c2c2c2"/><rect x="394.6" y="81.25" width="8" height="0.75" fill="#a9caec"/><rect x="394.6" y="83.55" width="8" height="0.75" fill="#a9caec"/><rect x="394.6" y="85.85" width="8" height="0.75" fill="#a9caec"/><rect x="394.6" y="88.15" width="8" height="0.75" fill="#a9caec"/><path d="M394.4 80.6V89.6M403 80.6V89.6" stroke="#a9caec" stroke-width="0.6"/><rect x="409.4" y="80.4" width="0.8" height="9.399999999999991" fill="#dcdcdc"/><path d="M418.8 81V89.6M421.8 85.6V89.6M417.8 89.6H419.8M420.8 89.6H422.8" fill="none" stroke="#b2b2b2" stroke-width="0.7"/><text x="420.4" y="84.55" font-size="4.6" fill="#8dbbe8">A</text><path d="M429.20 84.72L430.60 86.28L432.00 84.72" fill="none" stroke="#a4a4a4" stroke-width="0.85" stroke-linecap="round" stroke-linejoin="round"/><rect x="437.6" y="81.6" width="8.2" height="6.8" fill="none" stroke="#bdbdbd" stroke-width="0.8"/><rect x="440.2" y="80.6" width="3" height="9" fill="#f6f6f6"/><path d="M441.7 80.8V89.2M440.8 81.8L441.7 80.8L442.6 81.8M440.8 88.2L441.7 89.2L442.6 88.2" fill="none" stroke="#7fb2e5" stroke-width="0.7"/><rect x="439.6" y="83.8" width="4.2" height="2.4" fill="#d6e6f6"/><path d="M450.10 84.72L451.50 86.28L452.90 84.72" fill="none" stroke="#a4a4a4" stroke-width="0.85" stroke-linecap="round" stroke-linejoin="round"/><rect x="502.6" y="59" width="0.8" height="33" fill="#dcdcdc"/><rect x="511.6" y="63.2" width="15.3" height="11.2" fill="#fff" stroke="#5c5c5c" stroke-width="0.95"/><path d="M512.1 72.4L516.6 67.4L520.4 71.2L522.6 69.2L526.4 72.8V73.9H512.1Z" fill="#5aa2e4" stroke="#2f7ccc" stroke-width="0.5"/><circle cx="523.2" cy="65.8" r="1.05" fill="#f59a2c"/><path d="M530.90 68.12L532.30 69.68L533.70 68.12" fill="none" stroke="#3a3a3a" stroke-width="1.1" stroke-linecap="round" stroke-linejoin="round"/><text x="517" y="85.3" font-size="5.4" font-weight="bold" fill="#2a2a2a">画像</text><rect x="538.9" y="61.1" width="9.8" height="10.4" fill="#5c9fe3" stroke="#3f86d4" stroke-width="0.6"/><circle cx="548.6" cy="71" r="5.3" fill="#fff" stroke="#5c5c5c" stroke-width="0.95"/><path d="M558.00 68.12L559.40 69.68L560.80 68.12" fill="none" stroke="#3a3a3a" stroke-width="1.1" stroke-linecap="round" stroke-linejoin="round"/><text x="543.8" y="85.3" font-size="5.4" font-weight="bold" fill="#2a2a2a">図形</text><rect x="565.8" y="62.5" width="16" height="12.6" fill="#fff" stroke="#7a7a7a" stroke-width="1.1"/><rect x="564.9499999999999" y="61.65" width="1.7" height="1.7" fill="#3f96e0"/><rect x="580.9499999999999" y="61.65" width="1.7" height="1.7" fill="#3f96e0"/><rect x="564.9499999999999" y="74.25" width="1.7" height="1.7" fill="#3f96e0"/><rect x="580.9499999999999" y="74.25" width="1.7" height="1.7" fill="#3f96e0"/><text x="570.64" y="72.7" font-size="10.4" fill="#3f96e0">A</text><path d="M585.10 68.12L586.50 69.68L587.90 68.12" fill="none" stroke="#3a3a3a" stroke-width="1.1" stroke-linecap="round" stroke-linejoin="round"/><text x="565.8" y="85.26" font-size="5.3" font-weight="bold" fill="#2a2a2a">テキスト</text><text x="566" y="91.51" font-size="5.3" font-weight="bold" fill="#2a2a2a">ボックス</text><rect x="595.0" y="59" width="0.8" height="33" fill="#dcdcdc"/><rect x="606.4" y="63.8" width="10.2" height="10.8" fill="#f7cc84" stroke="#eeaa4e" stroke-width="0.8"/><rect x="603.3" y="61.3" width="6.4" height="6.2" fill="#fff" stroke="#5c5c5c" stroke-width="0.9"/><rect x="612.2" y="70.6" width="6.4" height="6" fill="#fff" stroke="#5c5c5c" stroke-width="0.9"/><path d="M622.70 68.12L624.10 69.68L625.50 68.12" fill="none" stroke="#3a3a3a" stroke-width="1.1" stroke-linecap="round" stroke-linejoin="round"/><text x="609" y="85.3" font-size="5.4" font-weight="bold" fill="#2a2a2a">整列</text><rect x="631.5" y="61.5" width="14.6" height="15" rx="1.6" fill="#fbfbfb" stroke="#cdcdcd" stroke-width="0.8"/><path d="M646.2 66.6L640.4 73L638.6 72L645.4 66Z" fill="#e6e6e6" stroke="#c4c4c4" stroke-width="0.4"/><path d="M640.2 73.2Q638.6 76.4 635.6 76.6Q637 74.4 638.4 72.2Z" fill="#a9caec"/><path d="M650.10 68.12L651.50 69.68L652.90 68.12" fill="none" stroke="#a4a4a4" stroke-width="0.85" stroke-linecap="round" stroke-linejoin="round"/><text x="630.6" y="85.26" font-size="5.3" fill="#a2a2a2">クイック</text><text x="630.6" y="91.76" font-size="5.3" fill="#a2a2a2">スタイル</text><path d="M660 68L662.8 64.6L666 67.6L663 71Z" fill="none" stroke="#bdbdbd" stroke-width="0.7"/><path d="M660.4 63.8L662.8 66" stroke="#bdbdbd" stroke-width="0.6"/><path d="M666.8 68.6C667.6 69.8 667.8 70.6 666.8 70.8C666 70.6 666 69.8 666.8 68.6Z" fill="#c9def3"/><text x="670" y="70.09" font-size="5.25" fill="#a2a2a2">図形の塗りつぶし</text><path d="M715.20 67.52L716.60 69.08L718.00 67.52" fill="none" stroke="#a4a4a4" stroke-width="0.85" stroke-linecap="round" stroke-linejoin="round"/><rect x="659.2" y="81.8" width="6.6" height="5.8" rx="0.8" fill="none" stroke="#bdbdbd" stroke-width="0.7"/><path d="M661.4 86.4L662 84.6L665.6 81L666.8 82.2L663.2 85.8Z" fill="#f6f6f6" stroke="#8dbbe8" stroke-width="0.6"/><text x="670" y="87" font-size="5.25" fill="#a2a2a2">図形の枠線</text><path d="M699.20 84.42L700.60 85.98L702.00 84.42" fill="none" stroke="#a4a4a4" stroke-width="0.85" stroke-linecap="round" stroke-linejoin="round"/><rect x="725.6" y="59" width="0.8" height="33" fill="#dcdcdc"/><rect x="733.4" y="61.3" width="16" height="15.3" fill="#e8937c"/><rect x="734.9" y="62.8" width="5.7" height="5.4" fill="#fcebe6"/><rect x="742.2" y="62.8" width="5.7" height="5.4" fill="#fcebe6"/><rect x="734.9" y="69.7" width="5.7" height="5.4" fill="#fcebe6"/><rect x="742.2" y="69.7" width="5.7" height="5.4" fill="#fcebe6"/><text x="735.8" y="85.25" font-size="5.4" font-weight="bold" fill="#2a2a2a">アド</text><text x="735.8" y="91.8" font-size="5.4" font-weight="bold" fill="#2a2a2a">イン</text><rect x="756.1" y="59" width="0.8" height="33" fill="#dcdcdc"/><rect x="769.6" y="63.8" width="14.8" height="10" fill="#f4f4f4" stroke="#5c5c5c" stroke-width="1.4"/><rect x="770.8" y="69" width="7.6" height="4.4" fill="#fff" stroke="#5c5c5c" stroke-width="0.9"/><path d="M773.6 59.4L767.8 66.6H770.6L768.2 71.8L774.6 64.4H771.6Z" fill="#f6a93b" stroke="#f6f6f6" stroke-width="0.5"/><text x="763.55" y="85.21" font-size="5.3" font-weight="bold" fill="#2a2a2a">デザイナー</text><text x="5.7" y="109.08" font-size="6.8" fill="#3c3c3c">1</text><text x="5.7" y="185.83" font-size="6.8" fill="#3c3c3c">2</text><text x="5.7" y="262.58" font-size="6.8" fill="#3c3c3c">3</text><text x="5.7" y="339.33" font-size="6.8" fill="#3c3c3c">4</text><text x="5.7" y="416.08" font-size="6.8" fill="#3c3c3c">5</text><text x="5.7" y="492.83" font-size="6.8" fill="#3c3c3c">6</text><clipPath id="c1"><rect x="30" y="120" width="31.4" height="20"/></clipPath><g clip-path="url(#c1)"><text transform="translate(40.70 132.67) scale(0.62 1)" x="0" y="0" font-size="6.9" font-weight="bold" fill="#129a2c" style="font-family:'Liberation Mono',monospace">SmartTravel</text></g><text x="57.7" y="188.73" font-size="3.9" font-weight="bold" fill="#0a8a0a">概要</text><text x="45.8" y="265.52" font-size="4" font-weight="bold" fill="#0a8a0a">旅程自動生成機能</text><text x="41.4" y="342.27" font-size="4" font-weight="bold" fill="#0a8a0a">リアルタイム言語翻訳</text><text x="47.4" y="419.02" font-size="4" font-weight="bold" fill="#0a8a0a">予算管理ツール</text><text x="30" y="495.75" font-size="3.95" font-weight="bold" fill="#0a8a0a">オフラインマップとナビゲーション</text><text x="441.9" y="163.99" font-size="21.3" font-weight="500" fill="#008000">概要</text><text x="702.4" y="211.66" font-size="11.75" fill="#fff">しめるようにデザイ</text><text x="131.2" y="494.72" font-size="6.1" font-weight="bold" fill="#1f1f1f">ノートを入力</text><text x="13" y="516.2" font-size="5.8" fill="#4d4d4d">スライド</text><text x="38.2" y="516.28" font-size="6" fill="#4d4d4d">2 / 9</text><text x="64.2" y="516.2" font-size="5.8" fill="#4d4d4d">日本語</text><circle cx="95" cy="511.2" r="0.9" fill="none" stroke="#666" stroke-width="0.6"/><path d="M91.6 512.6H98.4M95 512.6V514.8M95 514.8L92.8 517.6M95 514.8L97.2 517.6" fill="none" stroke="#666" stroke-width="0.7"/><text x="102.4" y="516.27" font-size="5.98" fill="#484848">アクセシビリティ:</text><text x="154.4" y="516.25" font-size="5.92" fill="#484848">検討が必要です</text><path d="M510.4 515.4H517.4M510.4 513.6H517.4M511.6 511.8L513.9 510L516.2 511.8Z" fill="#666" stroke="#666" stroke-width="0.7"/><text x="520.2" y="516.2" font-size="5.8" fill="#4d4d4d">ノート</text><path d="M549.4 510.6H556.4V515H552.4L551 516.6V515H549.4Z" fill="#555"/><text x="559.2" y="516.22" font-size="5.85" fill="#4d4d4d">コメント</text><rect x="589" y="507.6" width="19.4" height="12.4" fill="#bdbdbd"/><rect x="594.8" y="510" width="7.8" height="7.4" fill="#f2f2f2" stroke="#555" stroke-width="0.8"/><rect x="597" y="511.4" width="3.6" height="2.4" fill="none" stroke="#555" stroke-width="0.6"/><path d="M596.2 516H601.4" stroke="#555" stroke-width="0.6"/><rect x="615" y="510.6" width="3.2" height="2.4" rx="0.5" fill="#555"/><rect x="619.4" y="510.6" width="3.2" height="2.4" rx="0.5" fill="#555"/><rect x="615" y="514.6" width="3.2" height="2.4" rx="0.5" fill="#555"/><rect x="619.4" y="514.6" width="3.2" height="2.4" rx="0.5" fill="#555"/><path d="M634.4 510.6H638V516.6H634.4ZM638 510.6H641.6V516.6H638Z" fill="#ddd" stroke="#666" stroke-width="0.6"/><rect x="653.6" y="510.4" width="8" height="4.6" fill="#f0f0f0" stroke="#555" stroke-width="0.7"/><path d="M657.6 515V517M655.6 517.2H659.6" stroke="#555" stroke-width="0.7"/><rect x="656" y="511.8" width="3.2" height="1.2" fill="#8a8a8a"/><rect x="671.4" y="513.4" width="3.6" height="0.9" fill="#555"/><rect x="680" y="513.3" width="54" height="1.1" rx="0.5" fill="#8c8c8c"/><circle cx="708.4" cy="513.8" r="4.1" fill="#fff" stroke="#cfcfcf" stroke-width="0.4"/><path d="M738 513.8H742.2M740.1 511.7V515.9" stroke="#555" stroke-width="0.9"/><text x="752.2" y="516.28" font-size="6" fill="#4d4d4d" textLength="17.2" lengthAdjust="spacingAndGlyphs">123%</text><rect x="780.2" y="509.8" width="7.6" height="7.6" rx="0.8" fill="none" stroke="#666" stroke-width="0.7"/><path d="M782 512.6V511.6H783M785 511.6H786V512.6M786 514.6V515.6H785M783 515.6H782V514.6" fill="none" stroke="#666" stroke-width="0.6"/></svg>
</div></body></html>
